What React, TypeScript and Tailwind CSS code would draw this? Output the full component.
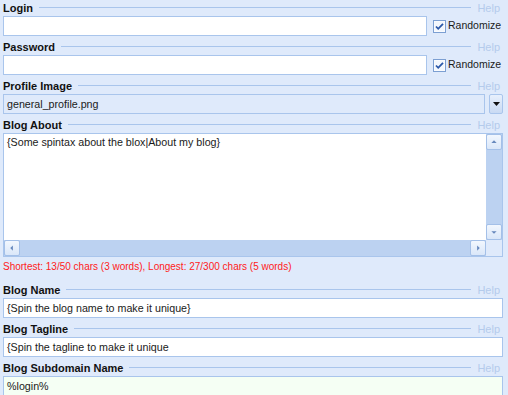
import React from "react";

// light blue WinForms-like form with labelled fields
const font = { fontFamily: '"Liberation Sans", Arial, sans-serif' };

function Header({ label }: { label: string }) {
  return (
    <div className="flex h-[13px] items-center leading-[13px]">
      <span className="text-[11px] font-bold text-[#111]">{label}</span>
      <div className="mx-[6px] mb-[2px] h-px flex-1 bg-[#a9c5ec]" />
      <span className="mr-[3px] text-[11px] text-[#b4cbec]">Help</span>
    </div>
  );
}

function TextBox({ value = "", className = "bg-white" }: { value?: string; className?: string }) {
  return (
    <div
      className={`flex h-[20px] flex-1 items-center border border-[#a9c5ec] pl-[3px] text-[10.7px] text-[#1a1a1a] ${className}`}
    >
      {value}
    </div>
  );
}

function CheckBox() {
  return (
    <div className="ml-[6px] flex w-[70px] items-center gap-[2px]">
      <svg width="13" height="13" viewBox="0 0 13 13">
        <rect x="0.5" y="0.5" width="12" height="12" fill="#fff" stroke="#7c9fd2" />
        <rect x="1.5" y="1.5" width="10" height="10" fill="#f3f7fd" />
        <path d="M3 6.5 L5.2 8.8 L10 3.8" fill="none" stroke="#2a57a8" strokeWidth="1.8" />
      </svg>
      <span className="text-[10.5px] text-[#1a1a1a]">Randomize</span>
    </div>
  );
}

function ArrowBtn({ dir }: { dir: "up" | "down" | "left" | "right" }) {
  const pts = {
    up: "5,9 8,6 11,9",
    down: "5,7 8,10 11,7",
    left: "9,5 6,8 9,11",
    right: "7,5 10,8 7,11",
  }[dir];
  return (
    <div className="flex h-[16px] w-[16px] items-center justify-center rounded-[2px] border border-[#a4c0e8] bg-gradient-to-b from-[#f2f7fe] to-[#dae7f9]">
      <svg width="16" height="16" viewBox="0 0 16 16">
        <polygon points={pts} fill="#6688bd" />
      </svg>
    </div>
  );
}

function Field({ label, children }: { label: string; children: React.ReactNode }) {
  return (
    <div className="flex flex-col">
      <Header label={label} />
      <div className="mt-px flex items-center">{children}</div>
    </div>
  );
}

export default function App() {
  return (
    <div style={font} className="flex h-[395px] w-[508px] flex-col overflow-hidden bg-[#dfeafb] pl-[3px] pr-[5px] pt-[2px]">
      <div className="flex flex-col gap-[5px]">
        <Field label="Login">
          <TextBox />
          <CheckBox />
        </Field>
        <Field label="Password">
          <TextBox />
          <CheckBox />
        </Field>
        <Field label="Profile Image">
          <TextBox value="general_profile.png" className="bg-[#dfeafb]" />
          <div className="ml-[4px] flex h-[20px] w-[14px] items-center justify-center rounded-[2px] border border-[#a9c5ec] bg-gradient-to-b from-[#e8f0fc] to-[#c9daf3]">
            <svg width="7" height="4" viewBox="0 0 7 4">
              <polygon points="0,0 7,0 3.5,4" fill="#111" />
            </svg>
          </div>
        </Field>
        <div className="flex flex-col">
          <Header label="Blog About" />
          <div className="mt-px flex h-[124px] flex-col border border-[#a9c5ec] bg-white">
            <div className="flex flex-1">
              <div className="flex-1 pl-[3px] pt-[2px] text-[10.7px] leading-[13px] text-[#1a1a1a]">
                {"{Some spintax about the blox|About my blog}"}
              </div>
              <div className="flex w-[16px] flex-col bg-[#bcd2f1]">
                <ArrowBtn dir="up" />
                <div className="flex-1" />
                <ArrowBtn dir="down" />
              </div>
            </div>
            <div className="flex h-[16px]">
              <div className="flex flex-1 bg-[#bcd2f1]">
                <ArrowBtn dir="left" />
                <div className="flex-1" />
                <ArrowBtn dir="right" />
              </div>
              <div className="w-[16px] bg-[#dfeafb]" />
            </div>
          </div>
        </div>
      </div>
      <div className="mt-[3px] text-[10px] leading-[13px] text-[#ff1a1a]">
        Shortest: 13/50 chars (3 words), Longest: 27/300 chars (5 words)
      </div>
      <div className="mt-[11px] flex flex-col gap-[5px]">
        <Field label="Blog Name">
          <TextBox value="{Spin the blog name to make it unique}" />
        </Field>
        <Field label="Blog Tagline">
          <TextBox value="{Spin the tagline to make it unique" />
        </Field>
        <Field label="Blog Subdomain Name">
          <TextBox value="%login%" className="bg-[#f5fff4]" />
        </Field>
      </div>
    </div>
  );
}
